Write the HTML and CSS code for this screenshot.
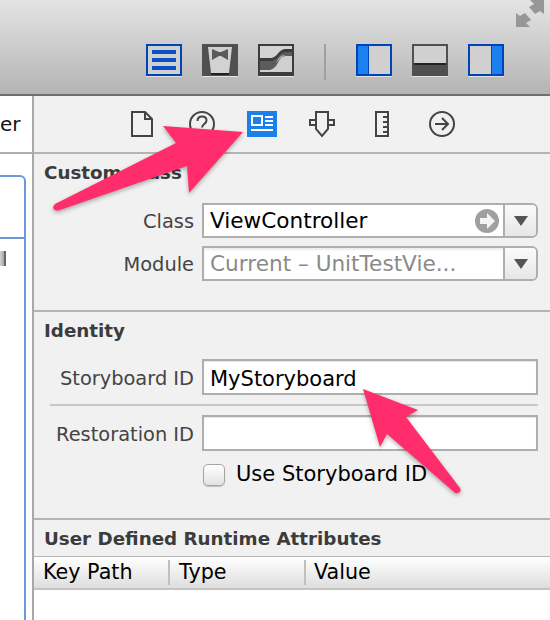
FILE: index.html
```html
<!DOCTYPE html>
<html>
<head>
    <title>Identity Inspector</title>
    <link rel="stylesheet" href="styles.css">
</head>
<body>
    <div class="toolbar">
        <div class="toolbar-top">
            <svg class="expand" width="28" height="28" viewBox="0 0 28 28">
                <path d="M0 13 4 16 9 13 15 20 10 23 14 27H0Z" fill="#979797"/>
                <path d="M28 14 24 11 19 14 13 7 18 4 14 0H28Z" fill="#979797"/>
            </svg>
        </div>
        <div class="toolbar-icons">
            <svg class="tool" width="36" height="33" viewBox="0 0 36 33">
                <rect x="0" y="0" width="36" height="32" fill="#0044b8"/>
                <rect x="2" y="2" width="32" height="28" fill="#d0d0d0"/>
                <path d="M6 6h24v4H6ZM6 14h24v4H6ZM6 22h24v4H6Z" fill="#0a50c8"/>
                <rect x="0" y="32" width="36" height="1" fill="#e4e4e4"/>
            </svg>
            <svg class="tool" width="36" height="33" viewBox="0 0 36 33">
                <rect x="0" y="0" width="36" height="32" fill="#505050"/>
                <path d="M6 3h24l-3 26H9Z" fill="#d2d2d2"/>
                <path d="M9 29h18v2H9Z" fill="#222"/>
                <path d="M10 5l7 3h2l7-3v11l-7-4h-2l-7 4Z" fill="#5a5a5a"/>
                <rect x="0" y="32" width="36" height="1" fill="#e4e4e4"/>
            </svg>
            <svg class="tool" width="36" height="33" viewBox="0 0 36 33">
                <rect x="0" y="0" width="36" height="32" fill="#3c3c3c"/>
                <path d="M2 2h32v3h-7c-6 0-8 9-14 9H2Z" fill="#d4d4d4"/>
                <path d="M2 17h11c7 0 8-9 14-9h7v3h-6c-6 0-8 9-14 9H2Z" fill="#5c5c5c"/>
                <path d="M2 26h8c4 0 6-5 9-9 2-3 4-6 8-6h7v17H2Z" fill="#d0d0d0"/>
                <path d="M2 20h12c6 0 8-9 14-9h6v1h-6c-6 0-7 6-10 10-2 2-4 4-8 4H2Z" fill="#5c5c5c"/>
                <rect x="0" y="32" width="36" height="1" fill="#e4e4e4"/>
            </svg>
            <div class="toolbar-sep"></div>
            <svg class="tool" width="36" height="33" viewBox="0 0 36 33">
                <rect x="0" y="0" width="36" height="32" fill="#0044b8"/>
                <rect x="2" y="2" width="32" height="28" fill="#d0d0d0"/>
                <rect x="2" y="2" width="10" height="28" fill="#1c80f0"/>
                <rect x="12" y="2" width="1" height="28" fill="#0044b8"/>
                <rect x="0" y="32" width="36" height="1" fill="#e4e4e4"/>
            </svg>
            <svg class="tool" width="36" height="33" viewBox="0 0 36 33">
                <rect x="0" y="0" width="36" height="32" fill="#505050"/>
                <rect x="2" y="2" width="32" height="17" fill="#d0d0d0"/>
                <rect x="2" y="19" width="32" height="2" fill="#222"/>
                <rect x="0" y="32" width="36" height="1" fill="#e4e4e4"/>
            </svg>
            <svg class="tool" width="36" height="33" viewBox="0 0 36 33">
                <rect x="0" y="0" width="36" height="32" fill="#0044b8"/>
                <rect x="2" y="2" width="32" height="28" fill="#d0d0d0"/>
                <rect x="24" y="2" width="10" height="28" fill="#1c80f0"/>
                <rect x="23" y="2" width="1" height="28" fill="#0044b8"/>
                <rect x="0" y="32" width="36" height="1" fill="#e4e4e4"/>
            </svg>
        </div>
    </div>

    <div class="main">
        <div class="left">
            <div class="left-top">er</div>
            <div class="left-body">
                <div class="scene-box">
                    <div class="scene-head"></div>
                    <div class="knob"></div>
                </div>
            </div>
        </div>

        <div class="inspector">
            <div class="tabs">
                <div class="tab">
                    <svg width="24" height="28" viewBox="0 0 24 28" fill="none" stroke="#444" stroke-width="2">
                        <path d="M2 2h13l7 7v17H2ZM15 2v7h7"/>
                    </svg>
                </div>
                <div class="tab">
                    <svg width="28" height="28" viewBox="0 0 28 28" fill="none" stroke="#444" stroke-width="2">
                        <circle cx="14" cy="14" r="12"/>
                        <path d="M9.500 11c0-3 2-4.500 4.500-4.500s4.500 1.500 4.500 4c0 3.500-4.500 3.500-4.500 7"/>
                        <path d="M14 19.500v2.500"/>
                    </svg>
                </div>
                <div class="tab">
                    <svg width="30" height="28" viewBox="0 0 30 28">
                        <rect y="1" width="30" height="26" fill="#1b80ea"/>
                        <path d="M5 6h10v9H5Z" fill="none" stroke="#fff" stroke-width="2"/>
                        <path d="M18 6h8v2h-8ZM18 10h8v2h-8ZM18 14h8v2h-8ZM4 19h22v2H4Z" fill="#fff"/>
                    </svg>
                </div>
                <div class="tab">
                    <svg width="28" height="28" viewBox="0 0 28 28" fill="none" stroke="#444" stroke-width="2">
                        <path d="M8 2h12v17l-6 7-6-7Z"/>
                        <path d="M8 10H2v5h6M20 10h6v5h-6"/>
                    </svg>
                </div>
                <div class="tab">
                    <svg width="16" height="28" viewBox="0 0 16 28" fill="none" stroke="#444" stroke-width="2">
                        <path d="M2 2h12v24H2ZM14 7H9M14 12H9M14 17H9M14 22H9"/>
                    </svg>
                </div>
                <div class="tab">
                    <svg width="28" height="28" viewBox="0 0 28 28" fill="none" stroke="#444" stroke-width="2">
                        <circle cx="14" cy="14" r="12"/>
                        <path d="M7 14h13M14 8l6 6-6 6"/>
                    </svg>
                </div>
            </div>

            <div class="section custom-class">
                <h3 class="section-title">Custom Class</h3>
                <div class="row row-combo row-class">
                    <span class="row-label label-combo">Class</span>
                    <div class="combo">
                        <div class="combo-text">ViewController</div>
                        <svg class="go" width="24" height="24" viewBox="0 0 24 24">
                            <circle cx="12" cy="12" r="12" fill="#a0a0a0"/>
                            <path d="M5 9h7V4l8 8-8 8v-5H5Z" fill="#f4f4f4"/>
                        </svg>
                        <div class="combo-btn"><span class="caret"></span></div>
                    </div>
                </div>
                <div class="row row-combo">
                    <span class="row-label label-combo">Module</span>
                    <div class="combo combo-off">
                        <div class="combo-text muted">Current – UnitTestVie...</div>
                        <div class="combo-btn"><span class="caret"></span></div>
                    </div>
                </div>
            </div>

            <div class="section identity">
                <h3 class="section-title">Identity</h3>
                <div class="row row-storyboard">
                    <span class="row-label">Storyboard ID</span>
                    <div class="field">MyStoryboard</div>
                </div>
                <div class="row-sep"></div>
                <div class="row">
                    <span class="row-label">Restoration ID</span>
                    <div class="field"></div>
                </div>
                <div class="check-row">
                    <span class="check"></span>
                    <span class="check-text">Use Storyboard ID</span>
                </div>
            </div>

            <div class="runtime">
                <h3 class="section-title">User Defined Runtime Attributes</h3>
                <div class="table-head">
                    <div class="col col-key">Key Path</div>
                    <div class="col col-type">Type</div>
                    <div class="col col-value">Value</div>
                </div>
                <div class="table-body"></div>
            </div>
        </div>
    </div>

    <!-- annotation arrows drawn over the screenshot -->
    <svg class="arrows" width="550" height="620" viewBox="0 0 550 620">
        <path class="arrow" d="M243 132 163 126 176 143 55 204Q51 208 55 210 57 211 60 210L187 166 189 193Z"/>
        <path class="arrow" d="M363 389 418 410 406 417 460 488Q462 492 458 493 456 494 454 492L387 434 380 447Z"/>
    </svg>
</body>
</html>
```

FILE: styles.css
```css
html, body {
    margin: 0;
    padding: 0;
}

body {
    position: relative;
    width: 550px;
    height: 620px;
    overflow: hidden;
    background-color: #fff;
    font-family: "DejaVu Sans", sans-serif;
    font-size: 20px;
}

/* Top toolbar */
.toolbar {
    height: 94px;
    border-bottom: 2px solid #6f6f6f;
    background: linear-gradient(#e4e4e4, #b4b4b4);
}

.toolbar-top {
    display: flex;
    justify-content: flex-end;
    height: 44px;
    padding-right: 6px;
}

.toolbar-icons {
    display: flex;
    align-items: flex-start;
    gap: 20px;
    padding-left: 146px;
}

.tool {
    display: block;
}

.toolbar-sep {
    width: 2px;
    height: 36px;
    margin: 0 10px;
    background-color: #a0a0a0;
}

/* Main area */
.main {
    display: flex;
    height: 524px;
}

.left {
    width: 32px;
    border-right: 2px solid #a8a8a8;
    overflow: hidden;
}

.left-top {
    height: 56px;
    line-height: 56px;
    border-bottom: 2px solid #b0b0b0;
    color: #111;
}

.left-body {
    padding-top: 21px;
}

.scene-box {
    width: 32px;
    height: 500px;
    margin-left: -10px;
    border: 2px solid #6a9bd8;
    border-top-right-radius: 6px;
}

.scene-head {
    height: 60px;
    border-bottom: 2px solid #6a9bd8;
}

.knob {
    width: 6px;
    height: 15px;
    margin: 12px 0 0 8px;
    background: linear-gradient(90deg, #d4d4d4, #a8a8a8 60%, #666 60%, #666);
}

.inspector {
    flex: 1;
    background-color: #f1f1f1;
}

/* Inspector tabs */
.tabs {
    display: flex;
    justify-content: center;
    height: 56px;
    border-bottom: 2px solid #b4b4b4;
}

.tab {
    display: flex;
    justify-content: center;
    align-items: center;
    width: 60px;
}

/* Sections */
.section {
    border-bottom: 2px solid #b4b4b4;
}

.custom-class {
    height: 156px;
}

.identity {
    height: 206px;
}

.section-title {
    margin: 0;
    padding: 6px 0 0 10px;
    height: 30px;
    font-size: 18.3px;
    line-height: 26px;
    font-weight: bold;
    color: #3c3c3c;
}

.row {
    display: flex;
    gap: 8px;
    height: 36px;
    padding-right: 12px;
}

.row-combo {
    height: 35px;
}

.row-class {
    margin-top: 13px;
    margin-bottom: 8px;
}

.row-storyboard {
    margin-top: 11px;
}

.row-label {
    width: 160px;
    flex-shrink: 0;
    font-size: 19.4px;
    line-height: 40px;
    text-align: right;
    color: #444;
}

.label-combo {
    line-height: 38px;
}

.row-sep {
    height: 2px;
    margin: 9px 12px 9px 16px;
    background-color: #c8c8c8;
}

.field,
.combo {
    flex: 1;
    display: flex;
    align-items: center;
    box-sizing: border-box;
    height: 36px;
    background-color: #fff;
    border: 2px solid #aeaeae;
    color: #000;
    font-size: 21px;
}

.field {
    padding: 3px 0 0 6px;
    box-shadow: inset 0 1px 1px #e4e4e4;
}

.combo {
    height: 35px;
    border-radius: 0 6px 6px 0;
    font-size: 21.6px;
}

.combo-off {
    box-shadow: inset 0 2px 2px #ececec;
}

.combo-text {
    flex: 1;
    padding-left: 6px;
    white-space: nowrap;
    overflow: hidden;
}

.muted {
    color: #8a8a8a;
}

.go {
    margin-right: 4px;
}

.combo-btn {
    display: flex;
    justify-content: center;
    align-items: center;
    align-self: stretch;
    width: 31px;
    border-left: 2px solid #aeaeae;
    background: linear-gradient(#fbfbfb, #e6e6e6);
    border-radius: 0 4px 4px 0;
}

.caret {
    width: 0;
    height: 0;
    border-left: 7px solid transparent;
    border-right: 7px solid transparent;
    border-top: 10px solid #555;
}

.check-row {
    display: flex;
    align-items: center;
    gap: 11px;
    margin: 12px 0 0 169px;
    height: 24px;
    color: #000;
}

.check-text {
    font-size: 21px;
    margin-bottom: 3px;
}

.check {
    box-sizing: border-box;
    width: 22px;
    height: 22px;
    border: 1px solid #a4a4a4;
    border-radius: 5px;
    background: linear-gradient(#fff, #e2e2e2);
    box-shadow: 0 1px 1px rgba(0, 0, 0, 0.2);
}

/* Runtime attributes table */
.runtime .section-title {
    height: 30px;
    border-bottom: 1px solid #b4b4b4;
}

.table-head {
    display: flex;
    align-items: center;
    height: 31px;
    border-bottom: 2px solid #c4c4c4;
    background: linear-gradient(#fff, #dedede);
    color: #000;
    font-size: 20.7px;
}

.col {
    box-sizing: border-box;
    line-height: 24px;
    padding-bottom: 1px;
}

.col-key {
    width: 134px;
    padding-left: 9px;
}

.col-type {
    width: 136px;
    padding-left: 9px;
    border-left: 2px solid #c0c0c0;
}

.col-value {
    padding-left: 8px;
    border-left: 2px solid #c0c0c0;
}

.table-body {
    height: 30px;
    background-color: #fff;
}

/* Annotation arrows */
.arrows {
    position: absolute;
    top: 0;
    left: 0;
}

.arrow {
    fill: #ff2d6b;
    filter: drop-shadow(0 2px 2px rgba(0, 0, 0, 0.3));
}
```
